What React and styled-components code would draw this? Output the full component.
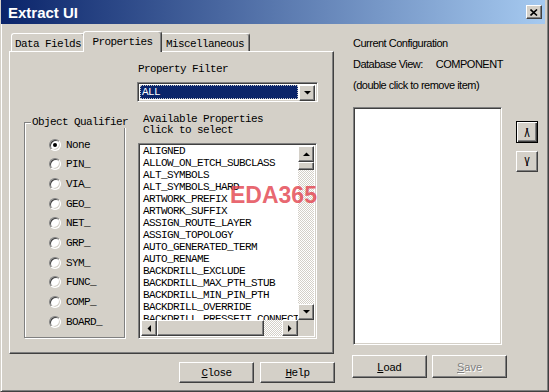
import React from 'react'
import styled, { createGlobalStyle, css } from 'styled-components'

const face = '#d4d0c8'
const mono = `'Liberation Mono', 'DejaVu Sans Mono', monospace`
const sans = `'Liberation Sans', Arial, sans-serif`

const GlobalStyle = createGlobalStyle`
  html, body {
    margin: 0;
    padding: 0;
    background: ${face};
  }
  body {
    width: 549px;
    height: 392px;
    overflow: hidden;
  }
`

const raised = css`
  box-sizing: border-box;
  border: 1px solid;
  border-color: #fff #404040 #404040 #fff;
  box-shadow: inset -1px -1px #808080;
  background: ${face};
`

const sunken = css`
  box-sizing: border-box;
  border: 1px solid;
  border-color: #808080 #fff #fff #808080;
  box-shadow: inset 1px 1px #404040, inset -1px -1px ${face};
`

const monoText = css`
  font-family: ${mono};
  font-size: 11px;
  letter-spacing: -0.6px;
  line-height: 12px;
  color: #000;
`

const Window = styled.div`
  box-sizing: border-box;
  width: 549px;
  height: 392px;
  background: ${face};
  border: 1px solid;
  border-top: none;
  border-color: ${face} #404040 #404040 ${face};
  box-shadow: inset 1px 0 #fff, inset -1px -1px #808080;
  padding: 0 3px 3px 3px;
  display: flex;
  flex-direction: column;
`

const TitleBar = styled.div`
  height: 24px;
  margin-left: -3px;
  display: flex;
  align-items: center;
  justify-content: space-between;
  padding: 0 3px 0 7px;
  background: linear-gradient(to right, #0a246a, #a6caf0);
`

const Title = styled.span`
  font-family: ${sans};
  font-weight: bold;
  font-size: 15px;
  color: #fff;
`

const CloseBox = styled.div`
  ${raised};
  width: 16px;
  height: 14px;
  display: flex;
  align-items: center;
  justify-content: center;
`

const Body = styled.div`
  flex: 1;
  display: flex;
`

const LeftCol = styled.div`
  margin-left: 5px;
  width: 325px;
  display: flex;
  flex-direction: column;
`

const TabRow = styled.div`
  margin-top: 7px;
  height: 20px;
  padding-left: 2px;
  display: flex;
  align-items: flex-end;
`

const Tab = styled.div`
  box-sizing: border-box;
  position: relative;
  width: ${(p) => p.$w}px;
  height: ${(p) => (p.$active ? 21 : 18)}px;
  margin: 0 ${(p) => (p.$active ? -2 : 0)}px ${(p) => (p.$active ? -1 : 0)}px;
  z-index: ${(p) => (p.$active ? 1 : 0)};
  border: 1px solid;
  border-bottom: none;
  border-color: #fff #404040 #404040 #fff;
  border-radius: 3px 3px 0 0;
  box-shadow: inset -1px 0 #808080;
  background: ${face};
  padding-top: 4px;
  text-align: center;
  ${monoText};
`

const Panel = styled.div`
  ${raised};
  height: 303px;
  display: flex;
  align-items: flex-start;
`

const GroupBox = styled.div`
  position: relative;
  box-sizing: border-box;
  margin: 70px 0 0 14px;
  width: 101px;
  height: 216px;
  border: 1px solid #808080;
  box-shadow: inset 1px 1px #fff, 1px 1px #fff;
  padding: 12px 0 0 24px;
  display: grid;
  grid-template-rows: repeat(10, 19.67px);
`

const Legend = styled.span`
  position: absolute;
  top: -7px;
  left: 6px;
  padding: 0 1px;
  background: ${face};
  white-space: nowrap;
  ${monoText};
`

const RadioRow = styled.label`
  display: flex;
  align-items: center;
  gap: 5px;
  ${monoText};
`

const RadioDot = styled.span`
  position: relative;
  box-sizing: border-box;
  width: 12px;
  height: 12px;
  border-radius: 50%;
  border: 1px solid;
  border-color: #808080 #fff #fff #808080;
  box-shadow: inset 1px 1px #404040, inset -1px -1px ${face};
  background: #fff;

  &::after {
    content: '';
    display: ${(p) => (p.$on ? 'block' : 'none')};
    position: absolute;
    left: 3px;
    top: 3px;
    width: 4px;
    height: 4px;
    border-radius: 50%;
    background: #000;
  }
`

const FilterCol = styled.div`
  margin-left: 12px;
  width: 181px;
  display: flex;
  flex-direction: column;
`

const FilterLabel = styled.div`
  margin-top: 11px;
  padding-left: 1px;
  ${monoText};
`

const Combo = styled.div`
  ${sunken};
  margin-top: 7px;
  height: 20px;
  background: #fff;
  padding: 2px;
  display: flex;
  gap: 1px;
`

const ComboValue = styled.div`
  flex: 1;
  background: #0a246a;
  outline: 1px dotted #c8c8c8;
  outline-offset: -1px;
  padding-left: 2px;
  ${monoText};
  line-height: 14px;
  color: #fff;
`

const ArrowButton = styled.div`
  ${raised};
  width: 16px;
  height: 16px;
  flex-shrink: 0;
  display: flex;
  align-items: center;
  justify-content: center;
`

const AvailLabel = styled.div`
  margin-top: 12px;
  padding-left: 6px;
  ${monoText};
  line-height: 11px;
`

const ListBox = styled.div`
  ${sunken};
  position: relative;
  margin: 7px 0 0 1px;
  width: 179px;
  height: 196px;
  padding: 2px;
  background: #fff;
  display: grid;
  grid-template-columns: 1fr 16px;
  grid-template-rows: 1fr 16px;
`

const Items = styled.div`
  overflow: hidden;
  padding-left: 2px;
  white-space: nowrap;
`

const Item = styled.div`
  ${monoText};

  &:first-child {
    margin-top: -1px;
  }
`

const Track = styled.div`
  display: flex;
  flex-direction: ${(p) => (p.$vertical ? 'column' : 'row')};
  background-image: conic-gradient(#fff 25%, ${face} 0 50%, #fff 0 75%, ${face} 0);
  background-size: 2px 2px;
`

const Thumb = styled.div`
  ${raised};
  width: ${(p) => p.$w}px;
  height: ${(p) => p.$h}px;
`

const Spacer = styled.div`
  flex: 1;
`

const Corner = styled.div`
  background: ${face};
`

const Watermark = styled.div`
  position: absolute;
  left: 91px;
  top: 40px;
  font-family: ${sans};
  font-weight: bold;
  font-size: 23px;
  line-height: 23px;
  color: rgba(226, 62, 74, 0.8);
  pointer-events: none;
`

const BottomRow = styled.div`
  margin: 8px -1px 0 0;
  display: flex;
  justify-content: flex-end;
  gap: 6px;
`

const PushButton = styled.div`
  ${raised};
  width: 75px;
  height: ${(p) => p.$h}px;
  display: flex;
  align-items: center;
  justify-content: center;
  font-family: ${(p) => (p.$mono ? mono : sans)};
  font-size: 11px;
  letter-spacing: ${(p) => (p.$mono ? '-0.6px' : '0')};
  color: ${(p) => (p.$disabled ? '#808080' : '#000')};
  text-shadow: ${(p) => (p.$disabled ? '1px 1px #fff' : 'none')};

  u {
    text-decoration: underline;
  }
`

const RightCol = styled.div`
  margin-left: 19px;
  display: flex;
  flex-direction: column;
`

const InfoLine = styled.div`
  font-family: ${sans};
  font-size: 11px;
  letter-spacing: -0.5px;
  line-height: 21px;
  color: #000;
  white-space: nowrap;

  &:first-child {
    margin-top: 9px;
  }
`

const ViewName = styled.span`
  margin-left: 13px;
`

const ConfigRow = styled.div`
  margin-top: 11px;
  display: flex;
  align-items: flex-start;
`

const ConfigList = styled.div`
  ${sunken};
  width: 149px;
  height: 238px;
  background: #fff;
`

const MoveCol = styled.div`
  margin: 14px 0 0 14px;
  display: flex;
  flex-direction: column;
  gap: 8px;
`

const MoveButton = styled.div`
  ${raised};
  width: 22px;
  height: ${(p) => p.$h}px;
  display: flex;
  align-items: center;
  justify-content: center;
  font-family: ${sans};
  font-size: 13px;
  letter-spacing: -2px;
  padding-right: 2px;
  ${(p) =>
    p.$default &&
    css`
      border: 1px solid #000;
      box-shadow: inset 1px 1px #fff, inset -1px -1px #404040, inset -2px -2px #808080;
    `}
`

const FileRow = styled.div`
  margin: 10px 0 0 -1px;
  display: flex;
  gap: 5px;
`

const Arrow = ({ dir }) => {
  const pts = {
    up: '0,4 7,4 3.5,0.5',
    down: '0,0 7,0 3.5,3.5',
    left: '4,0 4,7 0.5,3.5',
    right: '0,0 0,7 3.5,3.5',
  }[dir]
  const vertical = dir === 'up' || dir === 'down'
  return (
    <svg width={vertical ? 7 : 4} height={vertical ? 4 : 7} viewBox={vertical ? '0 0 7 4' : '0 0 4 7'}>
      <polygon points={pts} fill="#000" />
    </svg>
  )
}

const qualifiers = ['None', 'PIN_', 'VIA_', 'GEO_', 'NET_', 'GRP_', 'SYM_', 'FUNC_', 'COMP_', 'BOARD_']

const properties = [
  'ALIGNED',
  'ALLOW_ON_ETCH_SUBCLASS',
  'ALT_SYMBOLS',
  'ALT_SYMBOLS_HARD',
  'ARTWORK_PREFIX',
  'ARTWORK_SUFFIX',
  'ASSIGN_ROUTE_LAYER',
  'ASSIGN_TOPOLOGY',
  'AUTO_GENERATED_TERM',
  'AUTO_RENAME',
  'BACKDRILL_EXCLUDE',
  'BACKDRILL_MAX_PTH_STUB',
  'BACKDRILL_MIN_PIN_PTH',
  'BACKDRILL_OVERRIDE',
  'BACKDRILL_PRESSFIT_CONNECTOR',
]

const App = () => (
  <>
    <GlobalStyle />
    <Window>
      <TitleBar>
        <Title>Extract UI</Title>
        <CloseBox>
          <svg width="8" height="7" viewBox="0 0 8 7">
            <path d="M0.5 0.5 L7 6.5 M7 0.5 L0.5 6.5" stroke="#000" strokeWidth="1.6" />
          </svg>
        </CloseBox>
      </TitleBar>
      <Body>
        <LeftCol>
          <TabRow>
            <Tab $w={74}>Data Fields</Tab>
            <Tab $w={79} $active>Properties</Tab>
            <Tab $w={90}>Miscellaneous</Tab>
          </TabRow>
          <Panel>
            <GroupBox>
              <Legend>Object Qualifier</Legend>
              {qualifiers.map((q, i) => (
                <RadioRow key={q}>
                  <RadioDot $on={i === 0} />
                  {q}
                </RadioRow>
              ))}
            </GroupBox>
            <FilterCol>
              <FilterLabel>Property Filter</FilterLabel>
              <Combo>
                <ComboValue>ALL</ComboValue>
                <ArrowButton>
                  <Arrow dir="down" />
                </ArrowButton>
              </Combo>
              <AvailLabel>
                Available Properties
                <br />
                Click to select
              </AvailLabel>
              <ListBox>
                <Items>
                  {properties.map((p) => (
                    <Item key={p}>{p}</Item>
                  ))}
                </Items>
                <Track $vertical>
                  <ArrowButton>
                    <Arrow dir="up" />
                  </ArrowButton>
                  <Thumb $w={16} $h={8} />
                  <Spacer />
                  <ArrowButton>
                    <Arrow dir="down" />
                  </ArrowButton>
                </Track>
                <Track>
                  <ArrowButton>
                    <Arrow dir="left" />
                  </ArrowButton>
                  <Thumb $w={107} $h={16} />
                  <Spacer />
                  <ArrowButton>
                    <Arrow dir="right" />
                  </ArrowButton>
                </Track>
                <Corner />
                <Watermark>EDA365</Watermark>
              </ListBox>
            </FilterCol>
          </Panel>
          <BottomRow>
            <PushButton $mono $h={21}>
              <span><u>C</u>lose</span>
            </PushButton>
            <PushButton $mono $h={21}>
              <span><u>H</u>elp</span>
            </PushButton>
          </BottomRow>
        </LeftCol>
        <RightCol>
          <InfoLine>Current Configuration</InfoLine>
          <InfoLine>
            Database View:<ViewName>COMPONENT</ViewName>
          </InfoLine>
          <InfoLine>(double click to remove item)</InfoLine>
          <ConfigRow>
            <ConfigList />
            <MoveCol>
              <MoveButton $default $h={22}>/\</MoveButton>
              <MoveButton $h={21}>\/</MoveButton>
            </MoveCol>
          </ConfigRow>
          <FileRow>
            <PushButton $h={23}>
              <span><u>L</u>oad</span>
            </PushButton>
            <PushButton $h={23} $disabled>
              <span><u>S</u>ave</span>
            </PushButton>
          </FileRow>
        </RightCol>
      </Body>
    </Window>
  </>
)

export default App
